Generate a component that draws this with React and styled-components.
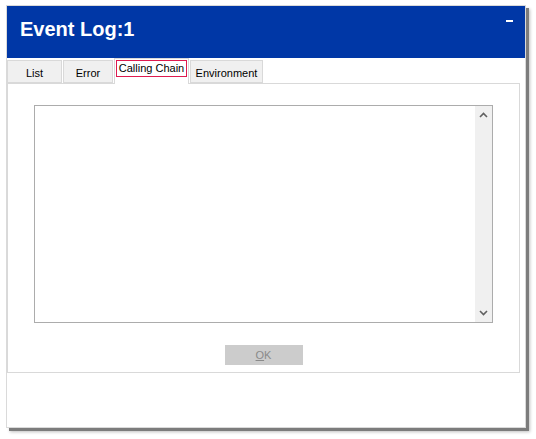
import React, { useState } from 'react';
import styled, { createGlobalStyle } from 'styled-components';

const Global = createGlobalStyle`
  html, body { margin: 0; padding: 0; background: #ffffff; }
  body { font-family: "Liberation Sans", Arial, sans-serif; }
`;

const Page = styled.div`
  box-sizing: border-box;
  min-height: 100vh;
  padding: 5px 0 0 6px;
`;

const Window = styled.div`
  width: 518px;
  height: 421px;
  border: 1px solid #dadada;
  background: #ffffff;
  display: flex;
  flex-direction: column;
  box-shadow: 3px 3px 0 #7c7c7c, 4px 4px 3px rgba(0, 0, 0, 0.25);
`;

const Header = styled.div`
  height: 52px;
  background: #0037a6;
  display: flex;
  justify-content: space-between;
  align-items: flex-start;
  padding: 0 12px 0 13px;
`;

const Title = styled.h1`
  margin: 0;
  padding-top: 12px;
  color: #ffffff;
  font-size: 20px;
  font-weight: bold;
  line-height: 22px;
`;

const MinButton = styled.span`
  display: block;
  width: 7px;
  height: 2px;
  margin-top: 14px;
  background: #ffffff;
`;

const Body = styled.div`
  flex: 1;
  padding: 0 5px 0 0;
  display: flex;
  flex-direction: column;
`;

const TabRow = styled.div`
  display: flex;
  align-items: flex-end;
  gap: 1px;
  height: 25px;
`;

const Tab = styled.div`
  box-sizing: border-box;
  flex-shrink: 0;
  white-space: nowrap;
  height: ${p => (p.active ? '26px' : '23px')};
  width: ${p => p.w}px;
  margin-bottom: ${p => (p.active ? '-1px' : '0')};
  background: ${p => (p.active ? '#ffffff' : '#f0f0f0')};
  border: 1px solid #d9d9d9;
  border-bottom: ${p => (p.active ? 'none' : '1px solid #d9d9d9')};
  font-size: 11px;
  color: #000000;
  display: flex;
  align-items: center;
  justify-content: center;
  padding-top: ${p => (p.active ? '0' : '2px')};
  padding-bottom: ${p => (p.active ? '6px' : '0')};
  position: relative;
  z-index: ${p => (p.active ? 1 : 0)};
  cursor: default;
`;

const Focus = styled.span`
  white-space: nowrap;
  border: 1px solid #de1a4f;
  padding: 1px 2px 2px;
  line-height: 12px;
`;

const Panel = styled.div`
  box-sizing: border-box;
  border: 1px solid #d9d9d9;
  height: 290px;
  padding: 21px 26px 0;
  display: flex;
  flex-direction: column;
  align-items: center;
`;

const TextBox = styled.div`
  box-sizing: border-box;
  align-self: stretch;
  height: 218px;
  border: 1px solid #acacac;
  display: flex;
  justify-content: flex-end;
`;

const ScrollTrack = styled.div`
  width: 17px;
  background: #f0f0f0;
  display: flex;
  flex-direction: column;
  justify-content: space-between;
  align-items: center;
  padding: 6px 0;
`;

const ButtonOk = styled.button`
  margin-top: 22px;
  width: 78px;
  height: 20px;
  border: 1px solid #cccccc;
  background: #cccccc;
  color: #8a8a8a;
  font-family: "Liberation Sans", Arial, sans-serif;
  font-size: 11px;
  padding: 0;
  u { text-decoration: underline; }
`;

const Arrow = ({ up }) => (
  <svg width="9" height="6" viewBox="0 0 9 6">
    <path
      d={up ? 'M1 5 L4.5 1.5 L8 5' : 'M1 1 L4.5 4.5 L8 1'}
      fill="none"
      stroke="#606060"
      strokeWidth="1.6"
    />
  </svg>
);

const tabs = [
  { id: 'list', label: 'List', w: 55 },
  { id: 'error', label: 'Error', w: 50 },
  { id: 'chain', label: 'Calling Chain', w: 75 },
  { id: 'env', label: 'Environment', w: 73 },
];

export default function App() {
  const [active, setActive] = useState('chain');
  return (
    <>
      <Global />
      <Page>
        <Window>
          <Header>
            <Title>Event Log:1</Title>
            <MinButton />
          </Header>
          <Body>
            <TabRow>
              {tabs.map(t => (
                <Tab key={t.id} w={t.w} active={active === t.id} onClick={() => setActive(t.id)}>
                  {active === t.id ? <Focus>{t.label}</Focus> : t.label}
                </Tab>
              ))}
            </TabRow>
            <Panel>
              <TextBox>
                <ScrollTrack>
                  <Arrow up />
                  <Arrow />
                </ScrollTrack>
              </TextBox>
              <ButtonOk disabled>
                <u>O</u>K
              </ButtonOk>
            </Panel>
          </Body>
        </Window>
      </Page>
    </>
  );
}
